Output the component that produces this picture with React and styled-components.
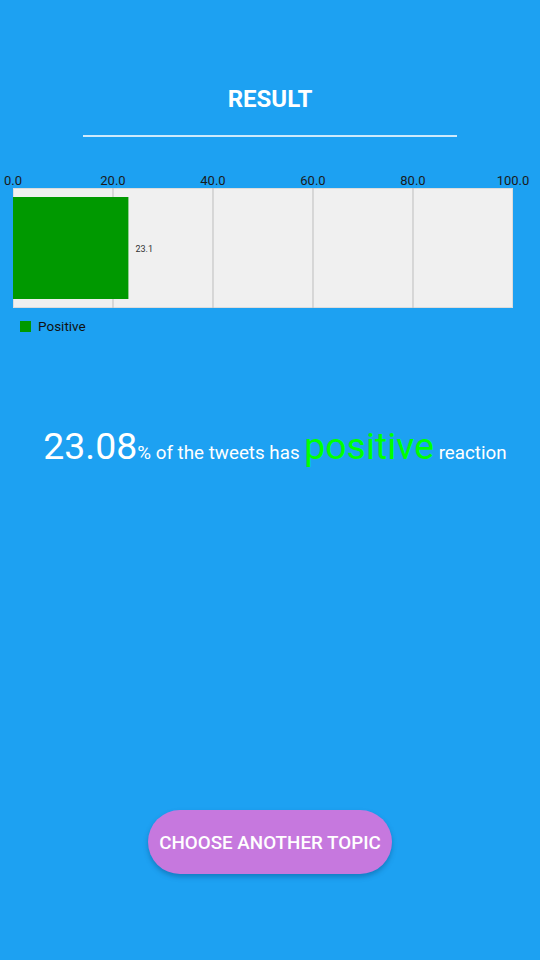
import React from "react";
import styled, { createGlobalStyle } from "styled-components";

const Global = createGlobalStyle`
  html, body { margin: 0; padding: 0; }
  body {
    background: #1da1f2;
    font-family: Roboto, "Noto Sans", "Liberation Sans", sans-serif;
  }
`;

const Page = styled.div`
  min-height: 960px;
  display: flex;
  flex-direction: column;
  align-items: stretch;
  box-sizing: border-box;
  padding-bottom: 86px;
`;

const Title = styled.h1`
  margin: 85px 0 0;
  text-align: center;
  color: #ffffff;
  font-size: 24px;
  line-height: 28px;
  font-weight: 700;
`;

const Rule = styled.div`
  align-self: center;
  width: 374px;
  height: 2px;
  margin-top: 22px;
  background: rgba(255, 255, 255, 0.78);
`;

const ChartSvg = styled.svg`
  display: block;
  margin-top: 28px;
  font-family: Roboto, "Liberation Sans", sans-serif;
`;

const Legend = styled.div`
  display: flex;
  align-items: center;
  gap: 7px;
  margin-top: 9px;
  padding-left: 20px;
  height: 15px;
`;

const Swatch = styled.span`
  width: 11px;
  height: 11px;
  background: ${(p) => p.$color};
`;

const LegendLabel = styled.span`
  font-size: 13.5px;
  color: #111111;
  line-height: 15px;
`;

const Statement = styled.p`
  margin: 87px 0 0;
  padding-left: 10px;
  text-align: center;
  color: #ffffff;
  font-size: 18.8px;
  line-height: 50px;
  white-space: nowrap;
`;

const Big = styled.span`
  font-size: 37.4px;
  color: ${(p) => p.$color || "#ffffff"};
`;

const Button = styled.button`
  align-self: center;
  margin-top: auto;
  width: 244px;
  height: 64px;
  border: none;
  border-radius: 32px;
  background: #c678de;
  color: #ffffff;
  font-family: Roboto, "Liberation Sans", sans-serif;
  font-size: 18.8px;
  font-weight: 500;
  padding-top: 2px;
  box-shadow: 0 3px 5px rgba(0, 60, 110, 0.35);
  cursor: pointer;
`;

const ticks = [0, 20, 40, 60, 80, 100];

function BarChart({ value }) {
  const x0 = 13;
  const w = 500;
  const top = 23;
  const h = 120;
  const barW = (value / 100) * w;
  return (
    <ChartSvg width="540" height="145" viewBox="0 0 540 145">
      <rect x={x0 + 0.5} y={top + 0.5} width={w - 1} height={h - 1} fill="#f0f0f0" stroke="#dcdcdc" />
      {ticks.slice(1, -1).map((t) => (
        <line key={t} x1={x0 + t * 5} x2={x0 + t * 5} y1={top} y2={top + h} stroke="#bdbdbd" strokeWidth="1" />
      ))}
      <rect x={x0} y={top + 9} width={barW} height={102} fill="#009900" />
      <text x={x0 + barW + 7} y={top + 64} fontSize="9" fill="#333333">
        {value.toFixed(1)}
      </text>
      {ticks.map((t) => (
        <text key={t} x={x0 + t * 5} y={20} fontSize="13" fill="#1a1a1a" textAnchor="middle">
          {t.toFixed(1)}
        </text>
      ))}
    </ChartSvg>
  );
}

export default function App() {
  return (
    <>
      <Global />
      <Page>
        <Title>RESULT</Title>
        <Rule />
        <BarChart value={23.08} />
        <Legend>
          <Swatch $color="#009900" />
          <LegendLabel>Positive</LegendLabel>
        </Legend>
        <Statement>
          <Big>23.08</Big>% of the tweets has <Big $color="#00ff00">positive</Big> reaction
        </Statement>
        <Button>CHOOSE ANOTHER TOPIC</Button>
      </Page>
    </>
  );
}
